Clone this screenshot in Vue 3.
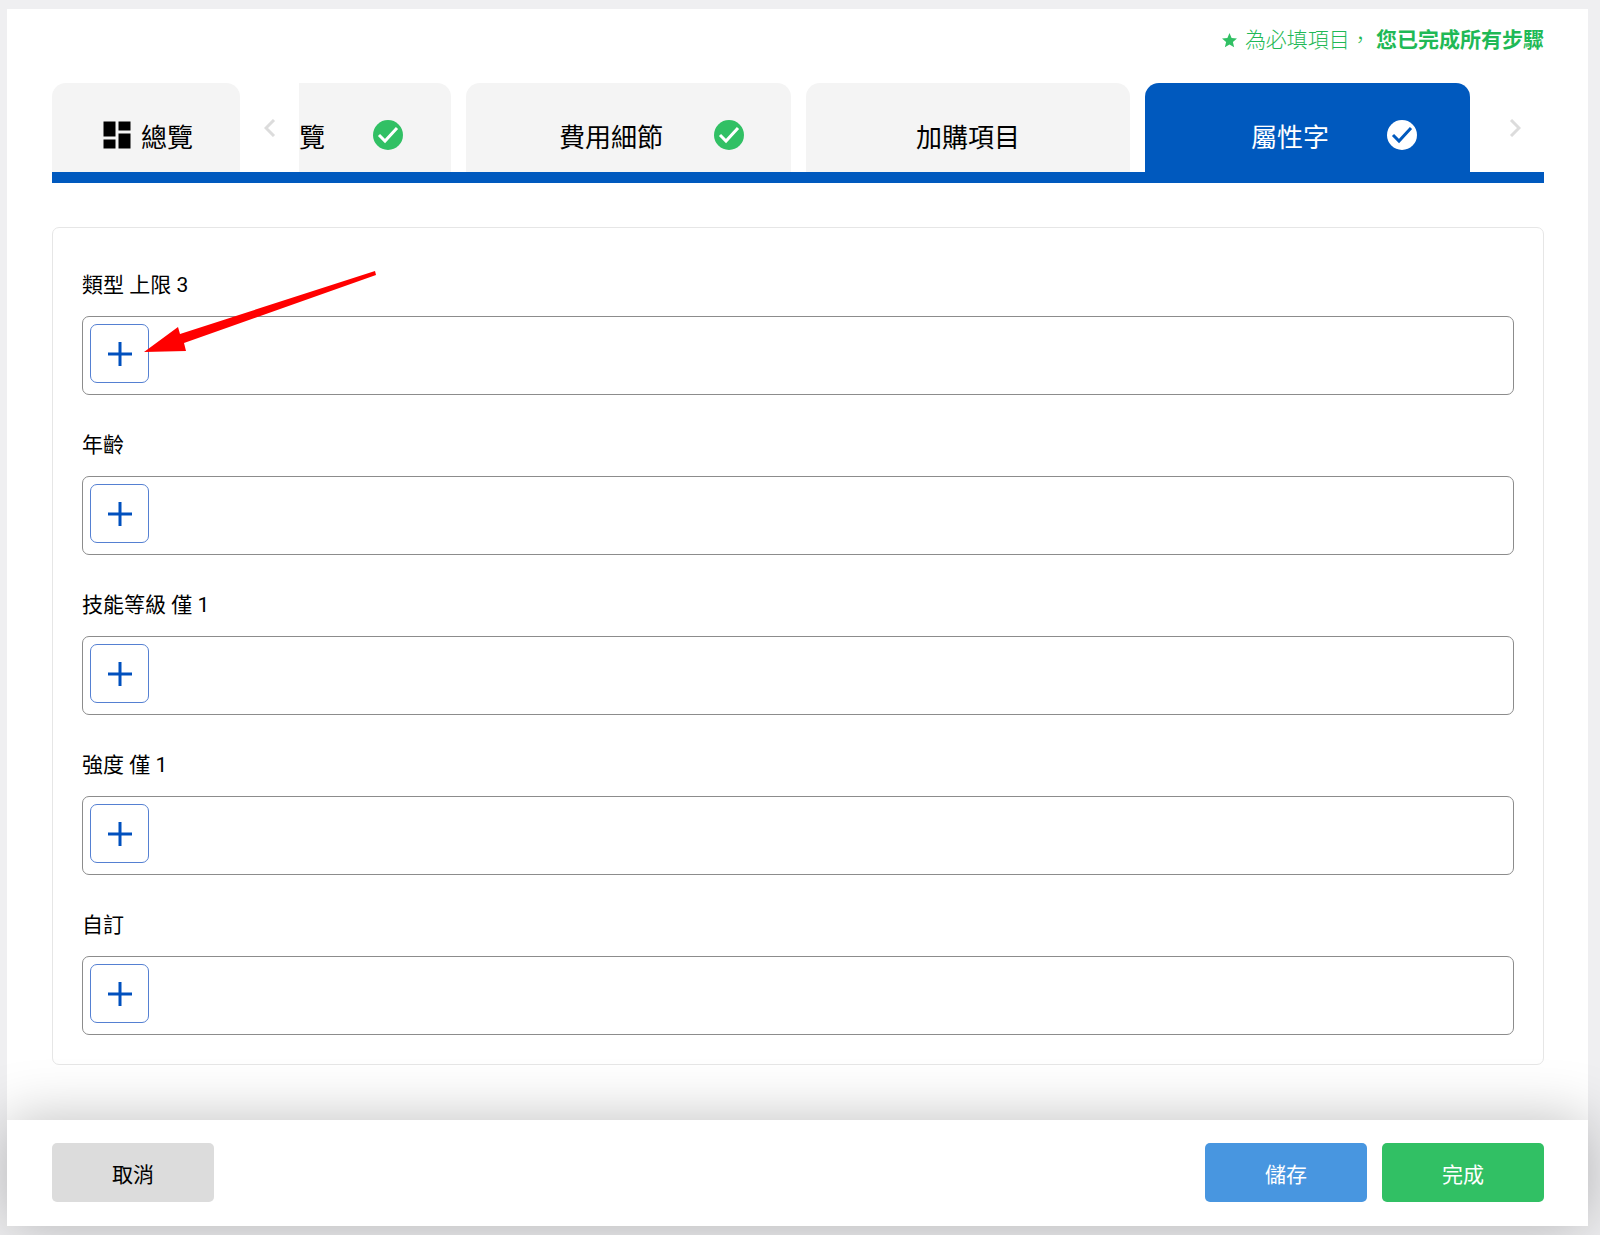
<script setup>
const tabs = [
  { label: '覽', done: true, partial: true },
  { label: '費用細節', done: true },
  { label: '加購項目' },
  { label: '屬性字', done: true, active: true },
]

const fields = [
  { id: 'type', label: '類型 上限 3', arrow: true },
  { id: 'age', label: '年齡' },
  { id: 'level', label: '技能等級 僅 1' },
  { id: 'intensity', label: '強度 僅 1' },
  { id: 'custom', label: '自訂' },
]
</script>

<template>
  <div class="page" lang="zh-Hant">
    <main class="content">
      <p class="notice">
        <svg class="star" viewBox="2 2 20 20" aria-hidden="true">
          <path d="M12 17.27 18.18 21l-1.64-7.03L22 9.24l-7.19-.61L12 2 9.19 8.63 2 9.24l5.46 4.73L5.82 21z" />
        </svg>
        <span>為必填項目， <strong>您已完成所有步驟</strong></span>
      </p>

      <nav class="tabbar">
        <button type="button" class="tab overview">
          <svg class="dashboard" viewBox="0 0 24 24" aria-hidden="true">
            <path d="M3 13h8V3H3v10zm0 8h8v-6H3v6zm10 0h8V11h-8v10zm0-18v6h8V3h-8z" />
          </svg>
          <span>總覽</span>
        </button>
        <button type="button" class="pager" aria-label="上一頁">
          <svg viewBox="0 0 12 18" aria-hidden="true"><path d="M10 1 2 9l8 8" /></svg>
        </button>
        <div class="strip">
          <button
            v-for="tab in tabs"
            :key="tab.label"
            type="button"
            class="tab"
            :class="{ active: tab.active, partial: tab.partial, done: tab.done }"
          >
            <span class="tab-label">{{ tab.label }}</span>
            <svg v-if="tab.done" class="check" viewBox="0 0 30 30" aria-hidden="true">
              <circle cx="15" cy="15" r="15" />
              <path d="m6 15 6 6L24 8" />
            </svg>
          </button>
        </div>
        <button type="button" class="pager" aria-label="下一頁">
          <svg viewBox="0 0 12 18" aria-hidden="true"><path d="m2 1 8 8-8 8" /></svg>
        </button>
      </nav>

      <section class="card">
        <div v-for="field in fields" :key="field.id" class="field">
          <label :for="field.id">{{ field.label }}</label>
          <div class="box">
            <button :id="field.id" type="button" class="add">
              <svg viewBox="0 0 24 24" aria-hidden="true"><path d="M12 0v24M0 12h24" /></svg>
            </button>
            <svg v-if="field.arrow" class="arrow" viewBox="0 0 233 82" aria-hidden="true">
              <path d="M0 81 34 56l2 7L231 0l1 4L40 72l2 8z" />
            </svg>
          </div>
        </div>
      </section>
    </main>

    <footer class="footer">
      <button type="button" class="action cancel">取消</button>
      <div class="group">
        <button type="button" class="action save">儲存</button>
        <button type="button" class="action finish">完成</button>
      </div>
    </footer>
  </div>
</template>

<style>
body {
  background: #efeff1;
}
</style>

<style scoped>
.page {
  margin: 9px 12px 0 7px;
  padding-bottom: 9px;
  font-family: Roboto, "Noto Sans CJK TC", sans-serif;
  font-size: 21px;
  color: #000;
}

button {
  margin: 0;
  padding: 0;
  border: 0;
  background: none;
  font: inherit;
  color: inherit;
  cursor: pointer;
}

svg {
  display: block;
  flex: none;
}

.content {
  padding: 16px 44px 55px 45px;
  background: #fff;
}

.notice {
  display: flex;
  justify-content: flex-end;
  align-items: center;
  gap: 8px;
  margin: 0 0 28px;
  font-weight: 300;
  line-height: 30px;
  color: #1fb956;
}

.notice strong {
  font-weight: 700;
}

.star {
  width: 15px;
  height: 15px;
  fill: #31c064;
}

.tabbar {
  display: flex;
  border-bottom: 11px solid #0059be;
}

.tab {
  height: 89px;
  padding-top: 15px;
  border-radius: 14px 14px 0 0;
  background: #f4f4f4;
  font-size: 26px;
}

.overview {
  display: flex;
  flex: none;
  justify-content: center;
  align-items: center;
  gap: 6px;
  width: 188px;
}

.dashboard {
  width: 36px;
  height: 36px;
}

.pager {
  display: flex;
  flex: none;
  justify-content: center;
  align-items: center;
  width: 59px;
}

.pager svg {
  width: 12px;
  height: 18px;
  fill: none;
  stroke: #dcdcdc;
  stroke-width: 3;
}

.strip {
  display: flex;
  flex: 1;
  gap: 15px;
  min-width: 0;
  padding-right: 15px;
}

.strip .tab {
  display: grid;
  flex: 325 1 0;
  grid-template-columns: 1fr auto 1fr;
  align-items: center;
  white-space: nowrap;
}

.tab-label {
  grid-column: 2;
}

.check {
  grid-column: 4;
  width: 30px;
  height: 30px;
  fill: #31c064;
}

.check path {
  fill: none;
  stroke: #fff;
  stroke-width: 3;
}

.strip .done {
  grid-template-columns: 40fr auto 22fr auto 20fr;
}

.strip .partial {
  flex-grow: 152;
  grid-template-columns: 0 auto 1fr auto 1fr;
  border-radius: 0 14px 0 0;
}

.strip .active {
  background: #0059be;
  color: #fff;
}

.active .check {
  fill: #fff;
}

.active .check path {
  stroke: #0059be;
}

.card {
  display: flex;
  flex-direction: column;
  gap: 35px;
  margin-top: 44px;
  padding: 42px 29px 29px;
  border: 1px solid #e6e6e6;
  border-radius: 7px;
}

.field label {
  display: block;
  margin-bottom: 16px;
  line-height: 30px;
}

.box {
  position: relative;
  padding: 7px 7px 11px;
  border: 1px solid #8c8c8c;
  border-radius: 7px;
}

.add {
  display: flex;
  justify-content: center;
  align-items: center;
  width: 59px;
  height: 59px;
  border: 1px solid #5580d2;
  border-radius: 7px;
}

.add svg {
  width: 24px;
  height: 24px;
  fill: none;
  stroke: #0050be;
  stroke-width: 3;
}

.arrow {
  position: absolute;
  top: -46px;
  left: 61px;
  width: 233px;
  height: 82px;
  fill: #f00;
  pointer-events: none;
}

.footer {
  display: flex;
  justify-content: space-between;
  padding: 23px 44px 24px 45px;
  background: #fff;
  box-shadow: 0 0 58px rgba(0, 0, 0, 0.26);
}

.group {
  display: flex;
  gap: 15px;
}

.action {
  width: 162px;
  height: 59px;
  border-radius: 5px;
  color: #fff;
}

.cancel {
  background: #dcdcdc;
  color: #000;
}

.save {
  background: #4896e0;
}

.finish {
  background: #31c064;
}
</style>
